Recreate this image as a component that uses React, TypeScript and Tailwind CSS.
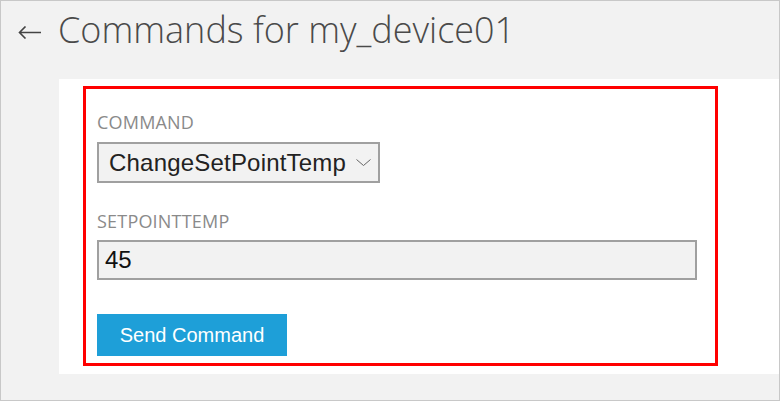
const ui = { fontFamily: '"Open Sans", "Noto Sans", sans-serif' };
const arial = { fontFamily: '"Liberation Sans", Arial, sans-serif' };

export default function App() {
  return (
    <div className="w-[780px] h-[401px] bg-[#f2f2f2] border border-[#c8c8c8] flex flex-col overflow-hidden">
      <div className="flex items-start h-[78px] pt-[11px] pl-[17px]">
        <svg width="24" height="13" viewBox="0 0 24 13" className="mt-[14px] text-[#444]" fill="none">
          <path d="M1 6.5H23M7.5 0.5L1.5 6.5L7.5 12.5" stroke="currentColor" strokeWidth="1.6" />
        </svg>
        <h1 className="ml-[16px] text-[36px] font-light text-[#4a4a4a] leading-none" style={ui}>
          Commands for my_device01
        </h1>
      </div>

      <div className="ml-[58px] bg-white h-[295px] pt-[7px] pl-[24px]">
        <div className="w-[635px] h-[280px] border-[3px] border-[#ff0000] pl-[11px] pt-[23px]">
          <label className="block text-[18px] text-[#8a8a8a] leading-[20px] tracking-[0.2px]" style={ui}>
            COMMAND
          </label>
          <div
            className="mt-[10px] w-[283px] h-[41px] bg-[#f2f2f2] border-2 border-[#a0a0a0] flex items-center pl-[10px] gap-[10px]"
            style={arial}
          >
            <span className="text-[24px] text-[#222] tracking-[0.2px]">ChangeSetPointTemp</span>
            <svg width="15" height="7" viewBox="0 0 15 7" fill="none" className="text-[#666]">
              <path d="M0.5 0.5L7.5 6.5L14.5 0.5" stroke="currentColor" strokeWidth="1" />
            </svg>
          </div>

          <label className="block mt-[28px] text-[18px] text-[#8a8a8a] leading-[20px] tracking-[0.2px]" style={ui}>
            SETPOINTTEMP
          </label>
          <div
            className="mt-[9px] w-[600px] h-[40px] bg-[#f2f2f2] border-2 border-[#a0a0a0] flex items-center pl-[6px]"
            style={arial}
          >
            <span className="text-[24px] text-[#111]">45</span>
          </div>

          <button
            className="mt-[34px] w-[190px] h-[42px] bg-[#1e9fd8] text-white text-[20px] flex items-center justify-center"
            style={arial}
          >
            Send Command
          </button>
        </div>
      </div>
    </div>
  );
}
